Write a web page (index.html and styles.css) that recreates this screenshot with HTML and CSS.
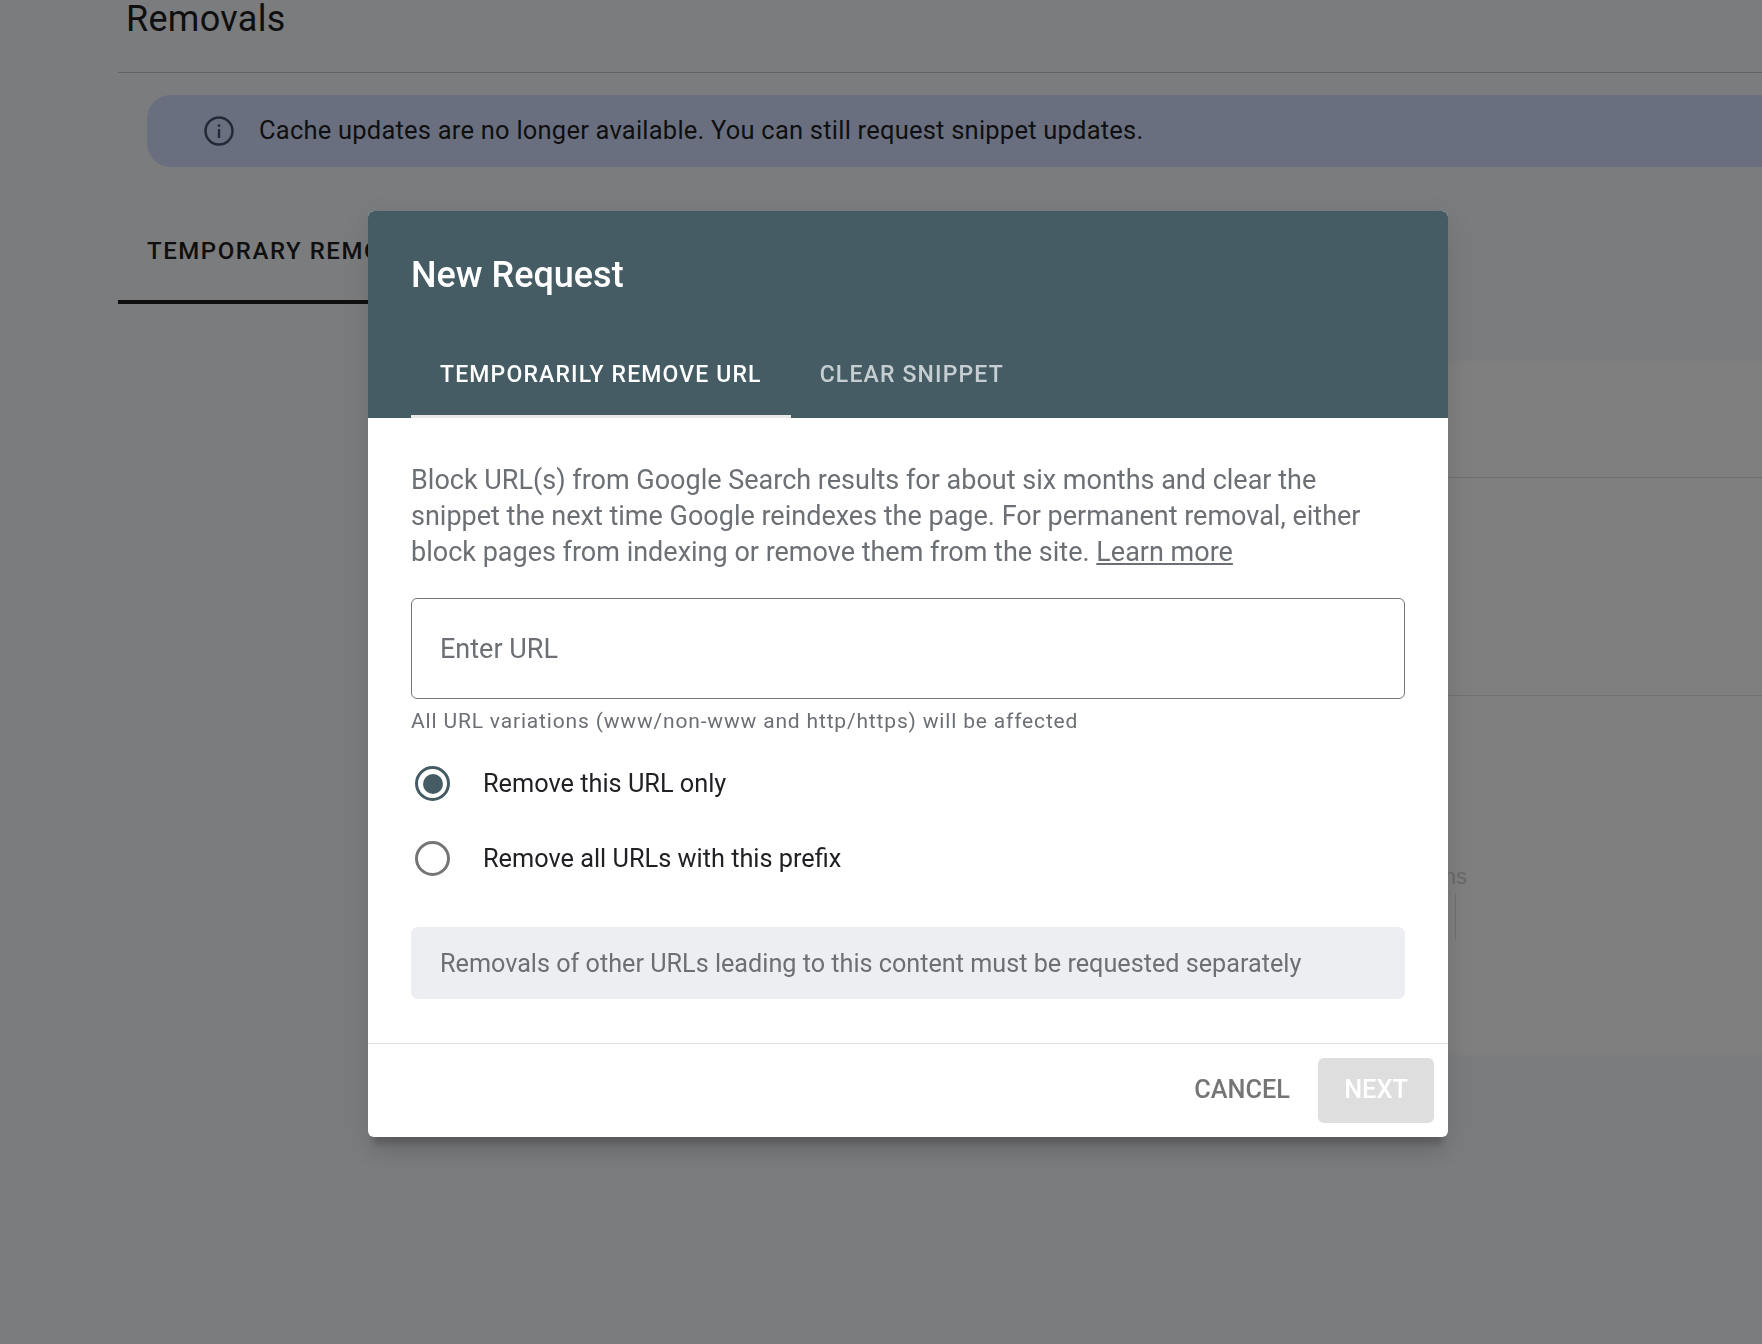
FILE: index.html
```html
<!DOCTYPE html>
<html lang="en">
<head>
<meta charset="utf-8">
<title>Removals</title>
<link rel="stylesheet" href="styles.css">
</head>
<body>
<div class="page">
  <header class="page-head"><h1 class="page-title">Removals</h1></header>
  <div class="banner">
    <svg class="banner-icon" viewBox="0 0 30 30" aria-hidden="true">
      <circle cx="15" cy="15" r="13.5" fill="none" stroke="currentColor" stroke-width="2.5"/>
      <rect x="13.8" y="13" width="2.4" height="9" fill="currentColor"/>
      <rect x="13.8" y="8.4" width="2.4" height="2.4" fill="currentColor"/>
    </svg>
    <span class="banner-text">Cache updates are no longer available. You can still request snippet updates.</span>
  </div>
  <div class="page-tabs"><div class="page-tab">TEMPORARY REMOVALS</div></div>
  <section class="panel">
    <div class="panel-row panel-row-a"></div>
    <div class="panel-row panel-row-b"></div>
    <div class="panel-row panel-row-c"><span class="panel-text">Columns</span><span class="panel-bar"></span></div>
  </section>
</div>
<div class="scrim">
  <div class="dialog">
    <div class="dialog-head">
      <h2 class="dialog-title">New Request</h2>
      <div class="dialog-tabs">
        <div class="dialog-tab active">TEMPORARILY REMOVE URL</div>
        <div class="dialog-tab">CLEAR SNIPPET</div>
      </div>
    </div>
    <div class="dialog-body">
      <p class="intro">Block URL(s) from Google Search results for about six months and clear the snippet the next time Google reindexes the page. For permanent removal, either block pages from indexing or remove them from the site. <a class="learn" href="#">Learn more</a></p>
      <div class="url-field">Enter URL</div>
      <p class="hint">All URL variations (www/non-www and http/https) will be affected</p>
      <div class="radio-row"><span class="radio checked"></span><span>Remove this URL only</span></div>
      <div class="radio-row"><span class="radio"></span><span>Remove all URLs with this prefix</span></div>
      <div class="notice">Removals of other URLs leading to this content must be requested separately</div>
    </div>
    <div class="dialog-foot">
      <button class="btn btn-text" type="button">CANCEL</button>
      <button class="btn btn-disabled" type="button">NEXT</button>
    </div>
  </div>
</div>
</body>
</html>
```
FILE: styles.css
```css
* { box-sizing: border-box; }
html, body { margin: 0; height: 100%; overflow: hidden; }
body { background: #f6f8fc; font-family: Roboto, "Liberation Sans", sans-serif; color: #1f1f1f; }
.page { padding-left: 118px; }
.page-head { height: 73px; border-bottom: 1.5px solid #c4c7c5; padding-left: 8px; }
.page-title { margin: 0; font-size: 36px; line-height: 39px; font-weight: 400; letter-spacing: 0.3px; color: #1f1f1f; }
.banner { display: flex; align-items: center; gap: 25px; height: 72px; margin: 22px 0 0 29px; padding-left: 57px; background: #d2deff; border-radius: 24px 0 0 24px; font-size: 25.5px; letter-spacing: 0.22px; color: #1f1f1f; }
.banner-text { padding-bottom: 2px; }
.banner-icon { width: 30px; height: 30px; color: #44546a; flex: none; }
.page-tabs { height: 137px; }
.page-tab { height: 137px; width: 400px; border-bottom: 4.5px solid #1f1f1f; padding: 66px 0 0 29px; font-size: 24px; font-weight: 500; letter-spacing: 1.55px; white-space: nowrap; color: #1f1f1f; line-height: 36px; }
.panel { margin: 57px 0 0 300px; background: #fff; height: 694px; }
.panel-row { border-bottom: 1.5px solid #e0e0e0; }
.panel-row-a { height: 117px; }
.panel-row-b { height: 218px; }
.panel-row-c { height: 359px; border: 0; display: flex; flex-direction: column; align-items: flex-end; padding: 166px 295px 0 0; }
.panel-text { font-family: "Liberation Sans", Arial, sans-serif; font-size: 22px; line-height: 30px; color: #d4d4d8; }
.panel-bar { width: 1.5px; height: 46px; margin: 2px 11px 0 0; background: #e4e4e4; }

.scrim { position: fixed; inset: 0; background: rgba(0,0,0,.5); }
.dialog { position: absolute; left: 368px; top: 211px; width: 1080px; height: 926px; background: #fff; border-radius: 6px; display: flex; flex-direction: column; box-shadow: 0 12px 6px -5px rgba(0,0,0,.18), 0 22px 20px -2px rgba(0,0,0,.07), 0 8px 32px 6px rgba(0,0,0,.07); }
.dialog-head { height: 207px; background: #455c64; border-radius: 6px 6px 0 0; padding: 37px 0 0 43px; color: #fff; display: flex; flex-direction: column; }
.dialog-title { margin: 0; font-size: 36px; line-height: 54px; font-weight: 500; }
.dialog-tabs { display: flex; margin-top: auto; }
.dialog-tab { padding: 0 29px; height: 81px; line-height: 76px; font-size: 23px; font-weight: 500; letter-spacing: 1.15px; color: rgba(255,255,255,.7); border-bottom: 3px solid transparent; white-space: nowrap; }
.dialog-tab.active { color: #fff; border-bottom-color: #e8e8e8; }
.dialog-body { flex: 1; padding: 44px 43px 0; }
.intro { margin: 0; font-size: 27px; line-height: 36px; color: #6c7074; }
.learn { color: #6c7074; text-decoration: underline; }
.url-field { height: 101px; margin-top: 28px; border: 1.5px solid #757575; border-radius: 6px; padding-left: 28px; display: flex; align-items: center; font-size: 27px; color: #6c7074; }
.hint { margin: 10px 0 0; font-size: 21px; line-height: 24px; letter-spacing: 0.83px; color: #6c7074; }
.radio-row { display: flex; align-items: center; gap: 33px; height: 75px; font-size: 25.3px; color: #202124; padding-left: 4px; }
.hint + .radio-row { margin-top: 13px; }
.radio { width: 35px; height: 35px; border-radius: 50%; border: 3px solid #757575; flex: none; display: flex; align-items: center; justify-content: center; }
.radio.checked { border-color: #455c64; }
.radio.checked::after { content: ""; width: 20px; height: 20px; border-radius: 50%; background: #455c64; }
.notice { height: 72px; margin-top: 31px; background: #edeef2; border-radius: 7px; padding-left: 29px; display: flex; align-items: center; font-size: 25.2px; color: #6c7074; }
.dialog-foot { height: 94px; border-top: 1.5px solid #e0e0e0; display: flex; justify-content: flex-end; align-items: flex-start; padding: 14px 14px 0 0; gap: 28px; }
.btn { height: 65px; border: 0; background: none; border-radius: 6px; font: 500 25.3px Roboto, sans-serif; padding: 0 0 2px; }
.btn-text { color: #757575; }
.btn-disabled { width: 116px; background: #dedede; color: #fff; }
```
